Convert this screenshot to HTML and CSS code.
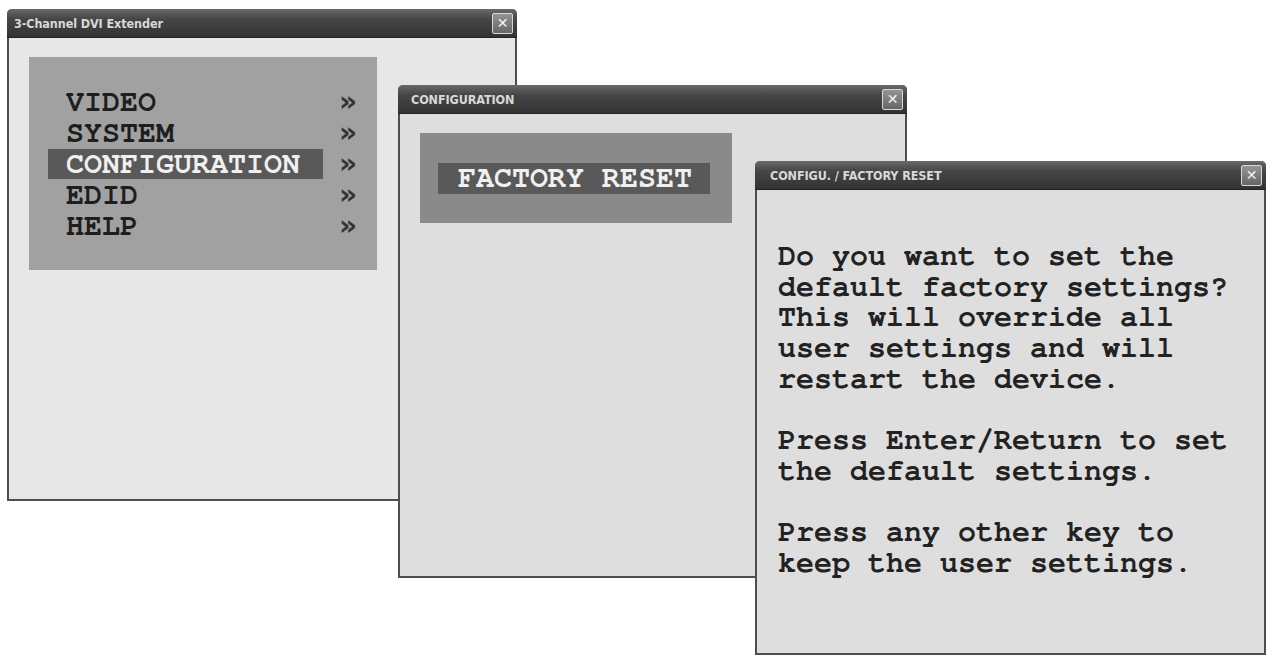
FILE: index.html
```html
<!doctype html>
<html lang="en">
    <head>
        <meta charset="utf-8">
        <title>3-Channel DVI Extender - OSD</title>
        <meta name="viewport" content="width=device-width, initial-scale=1">
        <link rel="stylesheet" href="styles.css">
    </head>
    <body>
        <div class="desktop">
            <!-- Main menu -->
            <div class="window main">
                <div class="title">
                    <span>3-Channel DVI Extender</span>
                    <span class="close">&#x2715;</span>
                </div>
                <div class="content">
                    <ul class="panel menu">
                        <li><span class="label">VIDEO</span><span class="more">&raquo;</span></li>
                        <li><span class="label">SYSTEM</span><span class="more">&raquo;</span></li>
                        <li class="selected"><span class="label">CONFIGURATION</span><span class="more">&raquo;</span></li>
                        <li><span class="label">EDID</span><span class="more">&raquo;</span></li>
                        <li><span class="label">HELP</span><span class="more">&raquo;</span></li>
                    </ul>
                </div>
            </div>

            <!-- Configuration submenu -->
            <div class="window config">
                <div class="title">
                    <span>CONFIGURATION</span>
                    <span class="close">&#x2715;</span>
                </div>
                <div class="content">
                    <div class="panel dark">
                        <span class="label selected">FACTORY RESET</span>
                    </div>
                </div>
            </div>

            <!-- Factory reset confirmation -->
            <div class="window reset">
                <div class="title">
                    <span>CONFIGU. / FACTORY RESET</span>
                    <span class="close">&#x2715;</span>
                </div>
                <div class="content message">
                    <p>Do you want to set the<br>default factory settings?<br>This will override all<br>user settings and will<br>restart the device.</p>
                    <p>Press Enter/Return to set<br>the default settings.</p>
                    <p>Press any other key to<br>keep the user settings.</p>
                </div>
            </div>
        </div>
    </body>
</html>
```

FILE: styles.css
```css
body {
    margin: 0;
    background-color: #fff;
    font-family: "Nimbus Mono PS", "Nimbus Mono L", "FreeMono", "Courier New", "Liberation Mono", monospace;
}

.desktop {
    position: relative;
    width: 1271px;
    height: 656px;
    overflow: hidden;
}

.window {
    position: absolute;
    box-sizing: border-box;
    display: flex;
    flex-direction: column;
    border: 2px solid #4e4e4e;
    border-top: none;
    border-radius: 5px 5px 0 0;
    background-color: #dedede;
}

.main {
    left: 7px;
    top: 9px;
    width: 510px;
    height: 492px;
    background-color: #e7e7e7;
}

.config {
    left: 398px;
    top: 85px;
    width: 509px;
    height: 493px;
}

.reset {
    left: 755px;
    top: 161px;
    width: 511px;
    height: 494px;
}

.title {
    display: flex;
    align-items: center;
    justify-content: space-between;
    height: 28px;
    margin: 0 -2px;
    padding: 0 4px 0 7px;
    border-radius: 5px 5px 0 0;
    background: linear-gradient(#6a6a6a, #464646 35%, #333 100%);
    border-bottom: 1px solid #222;
    color: #d8d8d8;
    font-family: "DejaVu Sans Condensed", "Liberation Sans Narrow", sans-serif;
    font-size: 12.5px;
    font-weight: bold;
    letter-spacing: -0.1px;
}

.config .title {
    padding-left: 13px;
}

.reset .title {
    padding-left: 15px;
}

.close {
    box-sizing: border-box;
    width: 21px;
    height: 21px;
    display: flex;
    align-items: center;
    justify-content: center;
    border: 1px solid #d8d8d8;
    border-radius: 2px;
    background: linear-gradient(#949494, #666);
    color: #f4f4f4;
    font-family: "DejaVu Sans", sans-serif;
    font-size: 14px;
    font-weight: bold;
    letter-spacing: 0;
}

.content {
    flex: 1;
    padding: 19px 20px;
}

.panel {
    margin: 0;
    list-style: none;
    background-color: #a1a1a1;
    font-weight: bold;
    font-size: 30px;
    line-height: 30px;
    color: #1e1e1e;
}

.menu {
    width: 348px;
    height: 213px;
    box-sizing: border-box;
    padding: 30px 0 0 19px;
}

.menu li {
    display: flex;
    align-items: center;
    height: 30px;
    margin-bottom: 1px;
}

.label {
    display: inline-block;
    width: 240px;
    padding: 0 17px 0 18px;
}

.selected .label,
.label.selected {
    background-color: #595959;
    color: #f0f0f0;
}

.more {
    margin-left: 16px;
    font-family: "DejaVu Sans", sans-serif;
    font-size: 28px;
    font-weight: bold;
    color: #333;
}

.dark {
    width: 312px;
    height: 90px;
    box-sizing: border-box;
    padding: 30px 0 0 18px;
    background-color: #8a8a8a;
}

.dark .label {
    width: auto;
    padding: 0 18px 0 20px;
    line-height: 31px;
}

.message {
    padding: 51px 0 0 21px;
    font-weight: bold;
    font-size: 30px;
    line-height: 30.7px;
    color: #222;
}

.message p {
    margin: 0 0 30.7px;
}
```
